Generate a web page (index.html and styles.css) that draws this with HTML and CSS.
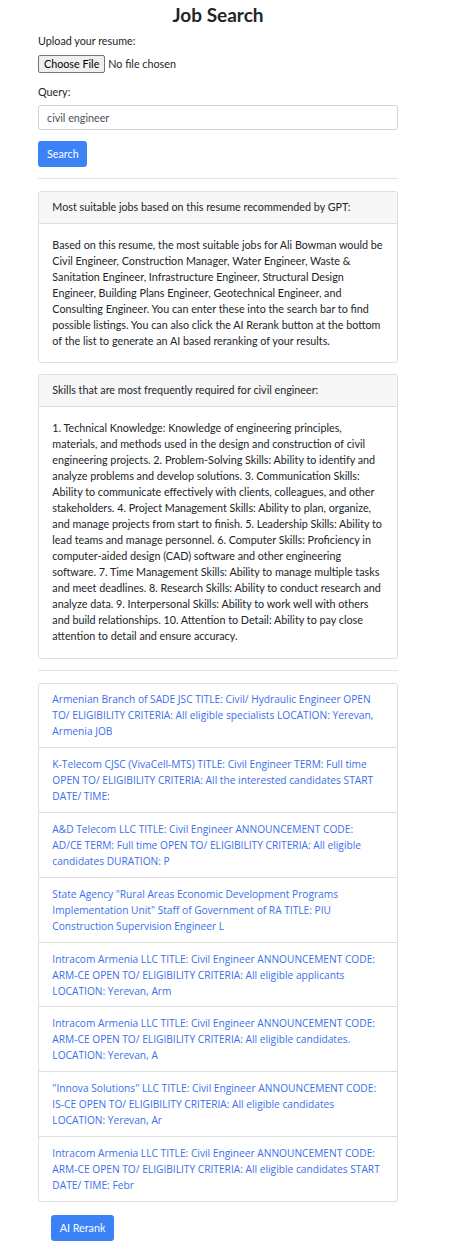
FILE: index.html
```html
<!DOCTYPE html>
<html lang="en">
<head>
<meta charset="utf-8">
<title>Job Search</title>
<link rel="stylesheet" href="styles.css">
</head>
<body>
<div class="container">
  <h1 class="title">Job Search</h1>
  <form class="search-form">
    <div class="form-group">
      <label class="form-label" for="resume">Upload your resume:</label>
      <input class="file-input" type="file" id="resume">
    </div>
    <div class="form-group">
      <label class="form-label" for="query">Query:</label>
      <input class="form-control" type="text" id="query" value="civil engineer">
    </div>
    <button class="btn btn-primary" type="button">Search</button>
  </form>
  <hr class="divider">
  <div class="card">
    <div class="card-header">Most suitable jobs based on this resume recommended by GPT:</div>
    <div class="card-body">Based on this resume, the most suitable jobs for Ali Bowman would be Civil Engineer, Construction Manager, Water Engineer, Waste &amp; Sanitation Engineer, Infrastructure Engineer, Structural Design Engineer, Building Plans Engineer, Geotechnical Engineer, and Consulting Engineer. You can enter these into the search bar to find possible listings. You can also click the AI Rerank button at the bottom of the list to generate an AI based reranking of your results.</div>
  </div>
  <div class="card">
    <div class="card-header">Skills that are most frequently required for civil engineer:</div>
    <div class="card-body">1. Technical Knowledge: Knowledge of engineering principles, materials, and methods used in the design and construction of civil engineering projects. 2. Problem-Solving Skills: Ability to identify and analyze problems and develop solutions. 3. Communication Skills: Ability to communicate effectively with clients, colleagues, and other stakeholders. 4. Project Management Skills: Ability to plan, organize, and manage projects from start to finish. 5. Leadership Skills: Ability to lead teams and manage personnel. 6. Computer Skills: Proficiency in computer-aided design (CAD) software and other engineering software. 7. Time Management Skills: Ability to manage multiple tasks and meet deadlines. 8. Research Skills: Ability to conduct research and analyze data. 9. Interpersonal Skills: Ability to work well with others and build relationships. 10. Attention to Detail: Ability to pay close attention to detail and ensure accuracy.</div>
  </div>
  <hr class="divider">
  <ul class="list-group">
    <li class="list-group-item"><a href="#">Armenian Branch of SADE JSC TITLE: Civil/ Hydraulic Engineer OPEN TO/ ELIGIBILITY CRITERIA: All eligible specialists LOCATION: Yerevan, Armenia JOB</a></li>
    <li class="list-group-item"><a href="#">K-Telecom CJSC (VivaCell-MTS) TITLE: Civil Engineer TERM: Full time OPEN TO/ ELIGIBILITY CRITERIA: All the interested candidates START DATE/ TIME:</a></li>
    <li class="list-group-item"><a href="#">A&amp;D Telecom LLC TITLE: Civil Engineer ANNOUNCEMENT CODE: AD/CE TERM: Full time OPEN TO/ ELIGIBILITY CRITERIA: All eligible candidates DURATION: P</a></li>
    <li class="list-group-item"><a href="#">State Agency "Rural Areas Economic Development Programs Implementation Unit" Staff of Government of RA TITLE: PIU Construction Supervision Engineer L</a></li>
    <li class="list-group-item"><a href="#">Intracom Armenia LLC TITLE: Civil Engineer ANNOUNCEMENT CODE: ARM-CE OPEN TO/ ELIGIBILITY CRITERIA: All eligible applicants LOCATION: Yerevan, Arm</a></li>
    <li class="list-group-item"><a href="#">Intracom Armenia LLC TITLE: Civil Engineer ANNOUNCEMENT CODE: ARM-CE OPEN TO/ ELIGIBILITY CRITERIA: All eligible candidates. LOCATION: Yerevan, A</a></li>
    <li class="list-group-item"><a href="#">"Innova Solutions" LLC TITLE: Civil Engineer ANNOUNCEMENT CODE: IS-CE OPEN TO/ ELIGIBILITY CRITERIA: All eligible candidates LOCATION: Yerevan, Ar</a></li>
    <li class="list-group-item"><a href="#">Intracom Armenia LLC TITLE: Civil Engineer ANNOUNCEMENT CODE: ARM-CE OPEN TO/ ELIGIBILITY CRITERIA: All eligible candidates START DATE/ TIME: Febr</a></li>
  </ul>
  <div class="rerank">
    <button class="btn btn-primary" type="button">AI Rerank</button>
  </div>
</div>
</body>
</html>
```
FILE: styles.css
```css
* { box-sizing: border-box; }

html, body {
  margin: 0;
  padding: 0;
  background: #ffffff;
}

body {
  font-family: Lato, "Liberation Sans", sans-serif;
  font-size: 10.75px;
  line-height: 16px;
  color: #212529;
}

.container {
  width: 360px;
  margin-left: 38px;
}

.title {
  margin: 3px 0 0;
  font-size: 19px;
  line-height: 24px;
  font-weight: 700;
  text-align: center;
  color: #212529;
}

.search-form {
  margin-top: 6.3px;
}

.form-group {
  margin-bottom: 10.67px;
}

.form-label {
  display: block;
  margin-bottom: 5.33px;
}

.file-input {
  display: block;
  font-family: Lato, "Liberation Sans", sans-serif;
  font-size: 10.75px;
  line-height: 18.4px;
  height: 18.4px;
  color: #212529;
  padding: 0;
  margin: 0;
}

.file-input::file-selector-button {
  font-family: Lato, "Liberation Sans", sans-serif;
  font-size: 10.75px;
  height: 18.4px;
  line-height: 14px;
  padding: 1px 5px;
  margin: 0 3px 0 0;
  border: 1px solid #767676;
  border-radius: 2px;
  background: #efefef;
  color: #000;
}

.form-control {
  display: block;
  width: 100%;
  height: 25.33px;
  padding: 4px 8px;
  font-family: Lato, "Liberation Sans", sans-serif;
  font-size: 10.75px;
  line-height: 16px;
  color: #495057;
  background: #fff;
  border: 1px solid #ced4da;
  border-radius: 2.67px;
  outline: none;
}

.btn {
  display: inline-block;
  height: 25.6px;
  padding: 4px 8px;
  font-family: Lato, "Liberation Sans", sans-serif;
  font-size: 10.75px;
  line-height: 16px;
  border: 1px solid transparent;
  border-radius: 2.67px;
  cursor: pointer;
}

.btn-primary {
  color: #fff;
  background: #3b82f6;
  border-color: #3b82f6;
}

.search-form .btn {
  width: 49px;
}

.divider {
  margin: 11.5px 0;
  height: 0;
  border: 0;
  border-top: 1px solid #e3e3e3;
}

.card {
  border: 1px solid #dedede;
  border-radius: 2.67px;
  margin-bottom: 10.67px;
  background: #fff;
}

.card:last-of-type {
  margin-bottom: 0;
}

.card-header {
  padding: 7.5px 13.33px;
  background: #f7f7f7;
  border-bottom: 1px solid #dedede;
  border-radius: 2.67px 2.67px 0 0;
}

.card-body {
  padding: 13.33px;
}

.list-group {
  list-style: none;
  margin: 0;
  padding: 0;
  border: 1px solid #dedede;
  border-radius: 2.67px;
}

.list-group-item {
  padding: 7.9px 13.33px;
  border-top: 1px solid #dedede;
  font-family: "Open Sans", Lato, sans-serif;
  font-size: 10.2px;
  line-height: 16px;
}

.list-group-item:first-child {
  border-top: 0;
}

.list-group-item a {
  color: #3a6fec;
  text-decoration: none;
}

.rerank {
  padding: 13.7px 0 0 13px;
}

.rerank .btn {
  width: 63px;
  padding: 4px 0;
  text-align: center;
}
```
